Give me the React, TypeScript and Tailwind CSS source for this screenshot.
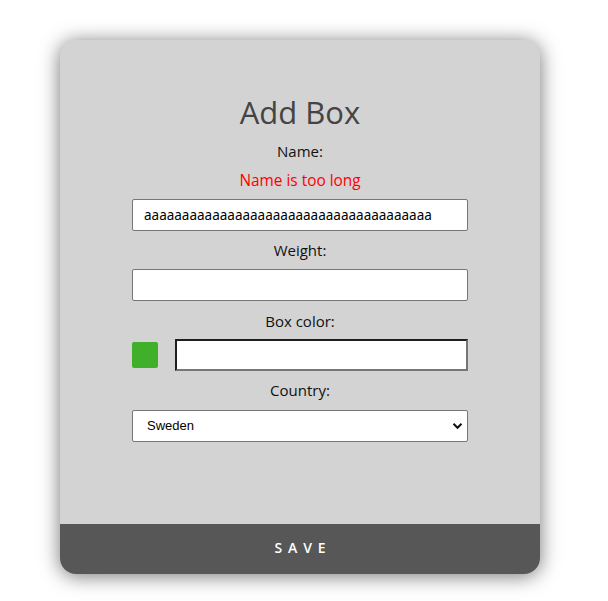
export default function App() {
  const longName = "a".repeat(38);

  return (
    <div className="min-h-[601px] w-full bg-white flex justify-center pt-10 pr-2 font-['Open_Sans',sans-serif]">
      <div className="w-[480px] h-[534px] bg-[#d3d3d3] rounded-2xl shadow-[0_2px_20px_rgba(0,0,0,0.55)] flex flex-col overflow-hidden">
        <div className="flex-1 flex flex-col items-center pt-[52px] gap-[6px]">
          <h1 className="text-[31px] leading-[40px] text-[#444]">Add Box</h1>
          <label className="mt-px text-[15px] leading-6 text-[#111]">Name:</label>
          <div className="text-[15.4px] leading-6 text-[#ff0000]">Name is too long</div>
          <input
            type="text"
            defaultValue={longName}
            className="w-[336px] h-8 bg-white border border-[#767676] rounded-[2px] px-[11px] text-[13.5px] text-black font-['Noto_Sans',sans-serif] outline-none"
          />
          <label className="mt-px text-[15px] leading-6 text-[#111]">Weight:</label>
          <input
            type="text"
            className="mt-px w-[336px] h-8 bg-white border border-[#767676] rounded-[2px] outline-none"
          />
          <label className="mt-[2px] text-[15px] leading-6 text-[#111]">Box color:</label>
          <div className="w-[336px] h-8 flex items-center gap-[17px]">
            <div className="w-[26px] h-[26px] rounded-[2px] bg-[#40b02b]" />
            <input
              type="text"
              className="flex-1 h-8 bg-white border-2 border-t-[#1e1e1e] border-l-[#1e1e1e] border-b-[#767676] border-r-[#767676] outline-none"
            />
          </div>
          <label className="mt-px text-[15px] leading-6 text-[#111]">Country:</label>
          <div className="mt-[2px] relative w-[336px] h-8">
            <select
              defaultValue="Sweden"
              className="appearance-none w-full h-8 bg-white border border-[#767676] rounded-[2px] pl-[14px] text-[13px] text-black font-['Liberation_Sans',sans-serif] outline-none"
            >
              <option>Sweden</option>
              <option>Norway</option>
              <option>Denmark</option>
              <option>Finland</option>
            </select>
            <svg
              className="absolute right-[5px] top-[12px] pointer-events-none"
              width="11"
              height="8"
              viewBox="0 0 11 8"
            >
              <path d="M1.5 1.8 L5.5 5.8 L9.5 1.8" fill="none" stroke="#111" strokeWidth="2" />
            </svg>
          </div>
        </div>
        <button className="h-[50px] w-full bg-[#575757] text-white text-[14px] font-semibold tracking-[0.42em] pl-[0.42em] pb-[3px] font-['Open_Sans',sans-serif]">
          SAVE
        </button>
      </div>
    </div>
  );
}
